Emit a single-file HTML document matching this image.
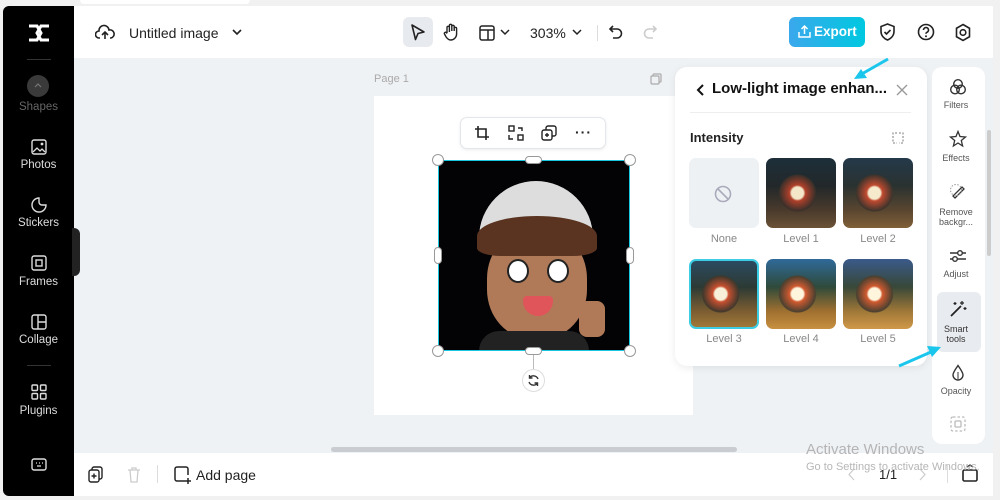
<!DOCTYPE html><html><head><meta charset="utf-8"><style>
*{box-sizing:border-box;margin:0;padding:0}
body{width:1000px;height:500px;background:#f1f1f1;font-family:"Liberation Sans",sans-serif;position:relative;overflow:hidden}
.a{position:absolute}
.side{left:3px;top:6px;width:71px;height:490px;background:#000;border-radius:6px 0 0 6px}
.si{position:absolute;left:0;width:71px;text-align:center;color:#ddd;font-size:11.5px}
.main{left:74px;top:6px;width:919px;height:490px;background:#eff2f5;border-radius:0 6px 6px 0;overflow:hidden}
.top{left:74px;top:6px;width:919px;height:52px;background:#fff}
.bot{left:74px;top:453px;width:919px;height:43px;background:#fff}
.t{font-size:13px;color:#222}
.thumb{position:absolute;width:70px;height:70px;border-radius:7px;overflow:hidden}
.lv{position:absolute;width:70px;text-align:center;font-size:11px;color:#888}
.ri{position:absolute;left:0;width:48px;text-align:center;font-size:9px;color:#555}
svg{position:absolute}
</style></head><body>
<div class="a" style="left:80px;top:0;width:170px;height:4px;background:#fff;border-radius:0 0 6px 6px"></div>
<div class="a main"></div>
<div class="a side">
 <svg style="left:24px;top:17px" width="24" height="20" viewBox="0 0 24 20"><path d="M2 3h8l4 7-4 7H2M22 3h-8l-4 7 4 7h8" fill="none" stroke="#fff" stroke-width="3"/></svg>
 <div class="a" style="left:24px;top:53px;width:24px;height:1px;background:#333"></div>
 <div class="a" style="left:24px;top:69px;width:22px;height:22px;border-radius:50%;background:#3a3a3a"></div>
 <svg style="left:30px;top:76px" width="10" height="7"><path d="M2 5l3-3 3 3" fill="none" stroke="#777" stroke-width="1.2"/></svg>
 <div class="si" style="top:95px;color:#666">Shapes</div>
 <svg style="left:28px;top:133px" width="16" height="16"><rect x="1" y="1" width="14" height="14" rx="2" fill="none" stroke="#ddd" stroke-width="1.4"/><path d="M2 13l4-4 3 3 2-2 3 3" fill="none" stroke="#ddd" stroke-width="1.3"/><circle cx="11" cy="5" r="1.4" fill="#ddd"/></svg>
 <div class="si" style="top:153px">Photos</div>
 <svg style="left:28px;top:191px" width="16" height="16"><path d="M8 1a7 7 0 1 0 7 7h-4a3 3 0 0 1-3-3z" fill="none" stroke="#ddd" stroke-width="1.4"/></svg>
 <div class="si" style="top:211px">Stickers</div>
 <svg style="left:28px;top:249px" width="16" height="16"><rect x="1" y="1" width="14" height="14" rx="2" fill="none" stroke="#ddd" stroke-width="1.4"/><rect x="5" y="5" width="6" height="6" fill="none" stroke="#ddd" stroke-width="1.4"/></svg>
 <div class="si" style="top:270px">Frames</div>
 <svg style="left:28px;top:308px" width="16" height="16"><rect x="1" y="1" width="14" height="14" rx="2" fill="none" stroke="#ddd" stroke-width="1.4"/><path d="M7 1v14M7 8h8" stroke="#ddd" stroke-width="1.4"/></svg>
 <div class="si" style="top:328px">Collage</div>
 <div class="a" style="left:24px;top:359px;width:24px;height:1px;background:#333"></div>
 <svg style="left:28px;top:378px" width="16" height="16"><g fill="none" stroke="#ddd" stroke-width="1.4"><rect x="1" y="1" width="5.5" height="5.5" rx="1"/><rect x="9.5" y="1" width="5.5" height="5.5" rx="1"/><rect x="1" y="9.5" width="5.5" height="5.5" rx="1"/><rect x="9.5" y="9.5" width="5.5" height="5.5" rx="1"/></g></svg>
 <div class="si" style="top:399px">Plugins</div>
 <svg style="left:28px;top:452px" width="16" height="14"><rect x="1" y="1" width="14" height="11" rx="2" fill="none" stroke="#ddd" stroke-width="1.4"/><path d="M5 5h1M8 5h1M11 5h1M6 8h4" stroke="#ddd" stroke-width="1.3"/></svg>
</div>
<div class="a" style="left:72px;top:228px;width:8px;height:48px;background:#222;border-radius:0 6px 6px 0"></div>
<div class="a top"></div>
<svg style="left:95px;top:24px" width="20" height="17"><path d="M5 14H4a3.5 3.5 0 0 1 0-7 5 5 0 0 1 10-1 4 4 0 0 1 2 8h-1M10 15V8M7 11l3-3 3 3" fill="none" stroke="#222" stroke-width="1.6"/></svg>
<div class="a" style="left:129px;top:25px;font-size:14px;color:#222">Untitled image</div>
<svg style="left:231px;top:28px" width="12" height="8"><path d="M2 2l4 4 4-4" fill="none" stroke="#222" stroke-width="1.6"/></svg>
<div class="a" style="left:403px;top:17px;width:30px;height:30px;background:#e7ebef;border-radius:6px"></div>
<svg style="left:410px;top:24px" width="16" height="17"><path d="M2 1l12 7-6 1.5-2.5 6z" fill="none" stroke="#222" stroke-width="1.6" stroke-linejoin="round"/></svg>
<svg style="left:443px;top:23px" width="16" height="18"><path d="M4 10V4.5a1.2 1.2 0 0 1 2.4 0V9M6.4 8V2.5a1.2 1.2 0 0 1 2.4 0V8M8.8 8V3.5a1.2 1.2 0 0 1 2.4 0V8M11.2 8V5.5a1.2 1.2 0 0 1 2.4 0V11a6 6 0 0 1-6 6c-2 0-3-1-4.5-3L1.5 11a1.2 1.2 0 0 1 2-1.3L4 10.5" fill="none" stroke="#222" stroke-width="1.4"/></svg>
<svg style="left:479px;top:25px" width="16" height="16"><rect x="1" y="1" width="14" height="14" rx="2" fill="none" stroke="#222" stroke-width="1.5"/><path d="M1 5h14M9 5v10" stroke="#222" stroke-width="1.5"/></svg>
<svg style="left:500px;top:29px" width="11" height="7"><path d="M1 1l4 4 4-4" fill="none" stroke="#222" stroke-width="1.5"/></svg>
<div class="a" style="left:530px;top:25px;font-size:14px;color:#222">303%</div>
<svg style="left:572px;top:29px" width="11" height="7"><path d="M1 1l4 4 4-4" fill="none" stroke="#222" stroke-width="1.5"/></svg>
<div class="a" style="left:597px;top:25px;width:1px;height:16px;background:#ddd"></div>
<svg style="left:608px;top:24px" width="16" height="16"><path d="M5 2L2 5l3 3M2 5h7a4.5 4.5 0 0 1 0 9H5" fill="none" stroke="#222" stroke-width="1.6"/></svg>
<svg style="left:642px;top:24px" width="16" height="16"><path d="M11 2l3 3-3 3M14 5H7a4.5 4.5 0 0 0 0 9h4" fill="none" stroke="#ccc" stroke-width="1.6"/></svg>
<div class="a" style="left:789px;top:17px;width:76px;height:30px;border-radius:6px;background:linear-gradient(90deg,#3aa8ec,#00c8e0);color:#fff;font-weight:bold;font-size:13.5px;line-height:30px;padding-left:25px">Export</div>
<svg style="left:798px;top:25px" width="13" height="13"><path d="M6.5 9V1M3.5 4l3-3 3 3M1 7v5h11V7" fill="none" stroke="#fff" stroke-width="1.5"/></svg>
<svg style="left:879px;top:23px" width="17" height="19"><path d="M8.5 1L2 3.5v5c0 4 3 7 6.5 8.5 3.5-1.5 6.5-4.5 6.5-8.5v-5z M5.5 9l2 2 4-4" fill="none" stroke="#222" stroke-width="1.6"/></svg>
<svg style="left:917px;top:23px" width="18" height="18"><circle cx="9" cy="9" r="7.5" fill="none" stroke="#222" stroke-width="1.6"/><path d="M6.5 7a2.5 2.5 0 1 1 3.5 2.3c-.7.3-1 .8-1 1.5" fill="none" stroke="#222" stroke-width="1.6"/><circle cx="9" cy="13.3" r="1" fill="#222"/></svg>
<svg style="left:954px;top:23px" width="18" height="19"><path d="M9 1.5l6.5 3.75v8.5L9 17.5 2.5 13.75v-8.5z" fill="none" stroke="#222" stroke-width="1.6"/><circle cx="9" cy="9.5" r="2.8" fill="none" stroke="#222" stroke-width="1.6"/></svg>
<div class="a" style="left:374px;top:73px;font-size:11px;color:#aaa">Page 1</div>
<svg style="left:650px;top:73px" width="12" height="12"><rect x="3" y="1" width="8" height="8" rx="1" fill="none" stroke="#aaa" stroke-width="1.2"/><rect x="1" y="3" width="8" height="8" rx="1" fill="#eff2f5" stroke="#aaa" stroke-width="1.2"/></svg>
<div class="a" style="left:374px;top:96px;width:319px;height:319px;background:#fff"></div>
<div class="a" style="left:460px;top:117px;width:146px;height:32px;background:#fff;border:1px solid #e3e6ea;border-radius:7px;box-shadow:0 1px 3px rgba(0,0,0,.08)"></div>
<svg style="left:474px;top:125px" width="16" height="16"><path d="M4 1v11h11M1 4h11v11" fill="none" stroke="#222" stroke-width="1.6"/></svg>
<svg style="left:508px;top:125px" width="16" height="16"><rect x="1" y="1" width="5" height="5" fill="none" stroke="#222" stroke-width="1.4"/><rect x="10" y="10" width="5" height="5" fill="none" stroke="#222" stroke-width="1.4"/><path d="M10 3h4v3M1 10v4h4" fill="none" stroke="#222" stroke-width="1.4"/></svg>
<svg style="left:541px;top:125px" width="16" height="16"><rect x="5" y="1" width="10" height="10" rx="2" fill="none" stroke="#222" stroke-width="1.4"/><rect x="1" y="5" width="10" height="10" rx="2" fill="#fff" stroke="#222" stroke-width="1.4"/><path d="M6 8v4M4 10h4" stroke="#222" stroke-width="1.4"/></svg>
<div class="a" style="left:575px;top:124px;font-size:14px;font-weight:bold;color:#222;letter-spacing:1px">···</div>
<div class="a" style="left:438px;top:160px;width:192px;height:191px;background:#030306;border:1.5px solid #18c6e0;overflow:hidden">
 <div class="a" style="left:40px;top:20px;width:114px;height:70px;border-radius:57px 57px 10px 10px;background:#ddd"></div>
 <div class="a" style="left:48px;top:68px;width:100px;height:110px;border-radius:45%;background:#b07a58"></div>
 <div class="a" style="left:38px;top:55px;width:120px;height:40px;border-radius:50% 50% 20% 20%;background:#5a3420"></div>
 <div class="a" style="left:68px;top:98px;width:22px;height:24px;border-radius:50%;background:#fff;border:2px solid #222"></div>
 <div class="a" style="left:108px;top:98px;width:22px;height:24px;border-radius:50%;background:#fff;border:2px solid #222"></div>
 <div class="a" style="left:84px;top:135px;width:30px;height:20px;border-radius:4px 4px 15px 15px;background:#e0555a"></div>
 <div class="a" style="left:40px;top:170px;width:110px;height:30px;background:#222;border-radius:20px 20px 0 0"></div>
 <div class="a" style="left:140px;top:140px;width:26px;height:36px;background:#b07a58;border-radius:8px"></div>
</div>
<div class="a" style="left:432px;top:154px;width:12px;height:12px;border-radius:50%;background:#fff;border:1px solid #999"></div>
<div class="a" style="left:624px;top:154px;width:12px;height:12px;border-radius:50%;background:#fff;border:1px solid #999"></div>
<div class="a" style="left:432px;top:345px;width:12px;height:12px;border-radius:50%;background:#fff;border:1px solid #999"></div>
<div class="a" style="left:624px;top:345px;width:12px;height:12px;border-radius:50%;background:#fff;border:1px solid #999"></div>
<div class="a" style="left:525px;top:156px;width:17px;height:8px;border-radius:4px;background:#fff;border:1px solid #999"></div>
<div class="a" style="left:525px;top:347px;width:17px;height:8px;border-radius:4px;background:#fff;border:1px solid #999"></div>
<div class="a" style="left:434px;top:247px;width:8px;height:17px;border-radius:4px;background:#fff;border:1px solid #999"></div>
<div class="a" style="left:626px;top:247px;width:8px;height:17px;border-radius:4px;background:#fff;border:1px solid #999"></div>
<div class="a" style="left:533px;top:355px;width:1px;height:14px;background:#bbb"></div>
<div class="a" style="left:522px;top:369px;width:23px;height:23px;border-radius:50%;background:#fff;border:1px solid #ddd"></div>
<svg style="left:527px;top:374px" width="13" height="13"><path d="M11 5A4.8 4.8 0 0 0 2.5 4M2 8a4.8 4.8 0 0 0 8.5 1M2.5 1v3h3M10.5 12V9h-3" fill="none" stroke="#333" stroke-width="1.4"/></svg>
<div class="a" style="left:331px;top:447px;width:406px;height:5px;border-radius:3px;background:#c9ccd0"></div>
<div class="a" style="left:675px;top:67px;width:252px;height:299px;background:#fff;border-radius:12px;box-shadow:0 2px 8px rgba(0,0,0,.08)"></div>
<svg style="left:695px;top:83px" width="10" height="14"><path d="M8 2L3 7l5 5" fill="none" stroke="#111" stroke-width="2"/></svg>
<div class="a" style="left:712px;top:80px;font-size:15px;font-weight:bold;color:#111">Low-light image enhan...</div>
<svg style="left:895px;top:83px" width="14" height="14"><path d="M2 2l10 10M12 2L2 12" stroke="#999" stroke-width="1.4"/></svg>
<div class="a" style="left:690px;top:112px;width:221px;height:1px;background:#eceef0"></div>
<div class="a" style="left:690px;top:130px;font-size:13px;font-weight:bold;color:#222">Intensity</div>
<svg style="left:891px;top:132px" width="14" height="12"><path d="M6 1H2v10h4M8 1h4v10H8" fill="none" stroke="#999" stroke-width="1.3" stroke-dasharray="2 1.5"/></svg>
<div class="thumb" style="left:689px;top:158px;background:#eef1f4"></div>
<svg style="left:714px;top:185px" width="18" height="18"><circle cx="9" cy="9" r="7.5" fill="none" stroke="#aab" stroke-width="1.6"/><path d="M4 4l10 10" stroke="#aab" stroke-width="1.6"/></svg>
<div class="thumb" style="left:766px;top:158px;background:radial-gradient(circle at 45% 50%,#f4e6c8 0 6px,#b0402a 8px,#3a302a 18px,transparent 19px),linear-gradient(180deg,#1d2f3a 0,#22282a 40%,#4a3a2c 75%,#6b5236)"></div>
<div class="thumb" style="left:843px;top:158px;background:radial-gradient(circle at 45% 50%,#f6eacc 0 6px,#c04a30 8px,#3e342c 18px,transparent 19px),linear-gradient(180deg,#24394a 0,#2a3230 40%,#5a4630 75%,#806038)"></div>
<div class="thumb" style="left:689px;top:259px;border:2px solid #3ccde4;background:radial-gradient(circle at 45% 50%,#f8f0d8 0 6px,#c85030 8px,#40382c 18px,transparent 19px),linear-gradient(180deg,#2b4a60 0,#2c3a34 40%,#7a5c32 75%,#a07838)"></div>
<div class="thumb" style="left:766px;top:259px;background:radial-gradient(circle at 45% 50%,#fff4dc 0 6px,#d05a30 8px,#4a4030 18px,transparent 19px),linear-gradient(180deg,#2f6a9a 0,#2f4a3a 40%,#a07030 75%,#c89040)"></div>
<div class="thumb" style="left:843px;top:259px;background:radial-gradient(circle at 45% 50%,#fff4dc 0 6px,#d05a30 8px,#4a4030 18px,transparent 19px),linear-gradient(180deg,#3a5a8a 0,#384838 40%,#a07838 75%,#d09848)"></div>
<div class="lv" style="left:689px;top:233px">None</div>
<div class="lv" style="left:766px;top:233px">Level 1</div>
<div class="lv" style="left:843px;top:233px">Level 2</div>
<div class="lv" style="left:689px;top:333px">Level 3</div>
<div class="lv" style="left:766px;top:333px">Level 4</div>
<div class="lv" style="left:843px;top:333px">Level 5</div>
<div class="a" style="left:932px;top:67px;width:53px;height:377px;background:#fff;border-radius:10px;overflow:hidden">
 <div class="a" style="left:5px;top:225px;width:44px;height:60px;background:#e8ebef;border-radius:6px"></div>
 <svg style="left:17px;top:11px" width="18" height="18"><g fill="none" stroke="#333" stroke-width="1.4"><circle cx="9" cy="6" r="4.3"/><circle cx="6" cy="11.5" r="4.3"/><circle cx="12" cy="11.5" r="4.3"/></g></svg>
 <div class="ri" style="top:33px">Filters</div>
 <svg style="left:17px;top:63px" width="18" height="18"><path d="M9 1.5l2 5 5.5.5-4.2 3.5 1.3 5.5L9 13l-4.6 3 1.3-5.5L1.5 7l5.5-.5z" fill="none" stroke="#333" stroke-width="1.3"/></svg>
 <div class="ri" style="top:86px">Effects</div>
 <svg style="left:17px;top:116px" width="18" height="18"><path d="M6 15l9-9-2-2-9 9z" fill="none" stroke="#333" stroke-width="1.3"/><circle cx="7" cy="7" r="5.5" fill="none" stroke="#999" stroke-width="1" stroke-dasharray="1.5 1.5"/></svg>
 <div class="ri" style="top:140px;line-height:10px">Remove<br>backgr...</div>
 <svg style="left:17px;top:180px" width="18" height="18"><path d="M1 6h16M1 12h16" stroke="#333" stroke-width="1.4"/><circle cx="11" cy="6" r="2.3" fill="#fff" stroke="#333" stroke-width="1.4"/><circle cx="6" cy="12" r="2.3" fill="#fff" stroke="#333" stroke-width="1.4"/></svg>
 <div class="ri" style="top:202px">Adjust</div>
 <svg style="left:17px;top:233px" width="18" height="18"><path d="M2 16l10-10" stroke="#222" stroke-width="1.8"/><path d="M13 1v4M11 3h4M16 7v3M14.5 8.5h3M6 2v3M4.5 3.5h3" stroke="#222" stroke-width="1.2"/></svg>
 <div class="ri" style="top:257px;line-height:10px;color:#333">Smart<br>tools</div>
 <svg style="left:19px;top:297px" width="14" height="17"><path d="M7 1.5C4 6 2 8.5 2 11a5 5 0 0 0 10 0c0-2.5-2-5-5-9.5z" fill="none" stroke="#333" stroke-width="1.4"/><path d="M7 8v7" stroke="#333" stroke-width="1"/></svg>
 <div class="ri" style="top:319px">Opacity</div>
 <svg style="left:18px;top:349px" width="16" height="16"><rect x="1" y="1" width="14" height="14" rx="2" fill="none" stroke="#bbb" stroke-width="1.3" stroke-dasharray="2.5 2"/><rect x="5" y="5" width="6" height="6" rx="1" fill="none" stroke="#bbb" stroke-width="1.3"/></svg>
</div>
<div class="a" style="left:987px;top:130px;width:4px;height:126px;background:#ccc;border-radius:2px"></div>
<svg style="left:850px;top:55px" width="42" height="30"><path d="M38 4L10 20" stroke="#1ac6ec" stroke-width="3"/><path d="M4 24l13-1-6-9z" fill="#1ac6ec"/></svg>
<svg style="left:895px;top:338px" width="50" height="32"><path d="M4 28L36 14" stroke="#1ac6ec" stroke-width="3"/><path d="M46 9l-14-1 5 11z" fill="#1ac6ec"/></svg>
<div class="a bot"></div>
<svg style="left:88px;top:466px" width="16" height="17"><rect x="4" y="1" width="10" height="12" rx="2" fill="none" stroke="#222" stroke-width="1.4"/><rect x="1" y="4" width="10" height="12" rx="2" fill="#fff" stroke="#222" stroke-width="1.4"/><path d="M6 7.5v5M3.5 10h5" stroke="#222" stroke-width="1.4"/></svg>
<svg style="left:127px;top:467px" width="14" height="16"><path d="M1 3h12M5 3V1h4v2M3 3l1 12h6l1-12" fill="none" stroke="#ccc" stroke-width="1.3"/></svg>
<div class="a" style="left:157px;top:465px;width:1px;height:18px;background:#ddd"></div>
<svg style="left:174px;top:466px" width="18" height="18"><path d="M11 15H3a2 2 0 0 1-2-2V3a2 2 0 0 1 2-2h9a2 2 0 0 1 2 2v6M14 12v6M11 15h6" fill="none" stroke="#222" stroke-width="1.5"/></svg>
<div class="a t" style="left:196px;top:467px;font-size:14px">Add page</div>
<svg style="left:848px;top:468px" width="8" height="13"><path d="M6 1L1 6.5 6 12" fill="none" stroke="#ccc" stroke-width="1.2"/></svg>
<div class="a" style="left:879px;top:467px;font-size:13px;color:#222">1/1</div>
<svg style="left:919px;top:468px" width="8" height="13"><path d="M1 1l5 5.5L1 12" fill="none" stroke="#ccc" stroke-width="1.2"/></svg>
<div class="a" style="left:947px;top:465px;width:1px;height:18px;background:#ddd"></div>
<svg style="left:961px;top:464px" width="18" height="18"><rect x="2" y="6" width="14" height="11" rx="1.5" fill="none" stroke="#222" stroke-width="1.6"/><path d="M6 3l3-2 3 2" fill="none" stroke="#222" stroke-width="1.3"/></svg>
<div class="a" style="left:806px;top:441px;font-size:15px;color:#aaa;opacity:.85">Activate Windows</div>
<div class="a" style="left:806px;top:461px;font-size:11px;color:#aaa;opacity:.85">Go to Settings to activate Windows.</div>
</body></html>
